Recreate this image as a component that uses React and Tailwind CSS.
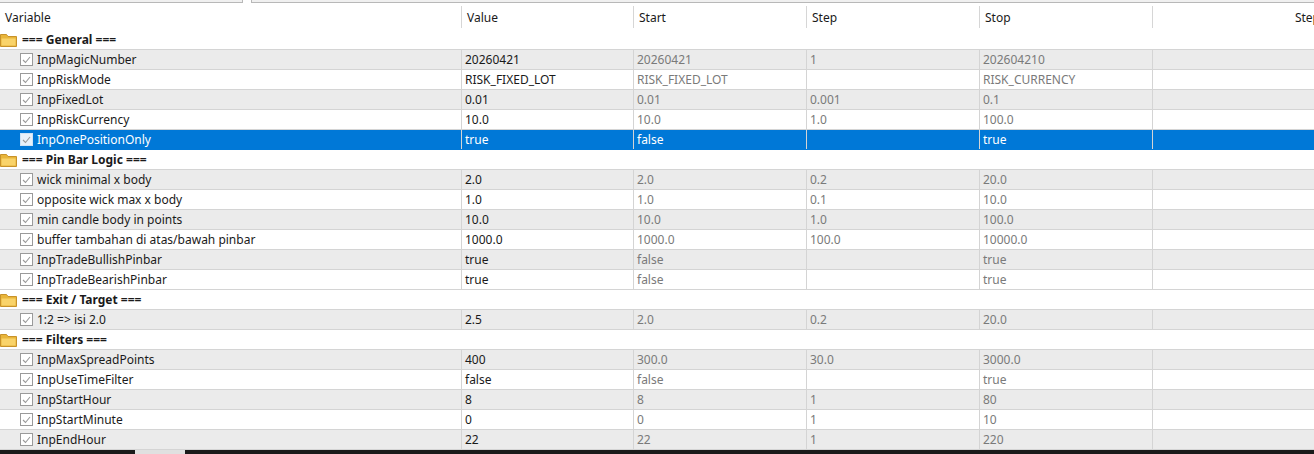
const cols = [461, 172, 173, 173, 173];

const data = [
  { g: "=== General ===" },
  ["InpMagicNumber", "20260421", "20260421", "1", "202604210"],
  ["InpRiskMode", "RISK_FIXED_LOT", "RISK_FIXED_LOT", "", "RISK_CURRENCY"],
  ["InpFixedLot", "0.01", "0.01", "0.001", "0.1"],
  ["InpRiskCurrency", "10.0", "10.0", "1.0", "100.0"],
  ["InpOnePositionOnly", "true", "false", "", "true", true],
  { g: "=== Pin Bar Logic ===" },
  ["wick minimal x body", "2.0", "2.0", "0.2", "20.0"],
  ["opposite wick max x body", "1.0", "1.0", "0.1", "10.0"],
  ["min candle body in points", "10.0", "10.0", "1.0", "100.0"],
  ["buffer tambahan di atas/bawah pinbar", "1000.0", "1000.0", "100.0", "10000.0"],
  ["InpTradeBullishPinbar", "true", "false", "", "true"],
  ["InpTradeBearishPinbar", "true", "false", "", "true"],
  { g: "=== Exit / Target ===" },
  ["1:2 => isi 2.0", "2.5", "2.0", "0.2", "20.0"],
  { g: "=== Filters ===" },
  ["InpMaxSpreadPoints", "400", "300.0", "30.0", "3000.0"],
  ["InpUseTimeFilter", "false", "false", "", "true"],
  ["InpStartHour", "8", "8", "1", "80"],
  ["InpStartMinute", "0", "0", "1", "10"],
  ["InpEndHour", "22", "22", "1", "220"],
];

const Folder = () => (
  <svg width="17" height="14" viewBox="0 0 17 14" className="shrink-0">
    <path d="M0.5 1.5h6l1.5 2h8.5v10h-16z" fill="#e8b53a" stroke="#c8922a" />
    <path d="M1.5 5.5h14v7h-14z" fill="#f9d36a" />
  </svg>
);

const Check = ({ sel }) => (
  <span className={`w-[13px] h-[13px] border shrink-0 flex items-center justify-center ${sel ? "border-[#cfe3f5] bg-[#e8f1fa]" : "border-[#9a9a9a] bg-white"}`}>
    <svg width="9" height="8" viewBox="0 0 9 8">
      <path d="M1 4l2.5 2.5L8 1" fill="none" stroke="#9a9a9a" strokeWidth="1.1" />
    </svg>
  </span>
);

export default function App() {
  let n = 0;
  return (
    <div className="w-[1314px] h-[454px] overflow-hidden bg-white text-[12px] text-[#1a1a1a]" style={{ fontFamily: "'Noto Sans', 'Open Sans', sans-serif" }}>
      <div className="h-[3px] flex">
        <div className="w-[243px] border-b border-r border-[#b8b8b8] bg-[#f0f0f0]" />
        <div className="w-[8px]" />
        <div className="flex-1 border-b border-l border-[#b8b8b8] bg-[#f0f0f0]" />
      </div>
      <div className="h-[27px] flex">
        {["Variable", "Value", "Start", "Step", "Stop"].map((h, i) => (
          <div key={h} className="flex pt-[7px] shrink-0" style={{ width: cols[i] }}>
            {i > 0 && <div className="w-px h-[22px] bg-[#d6d6d6] -mt-[4px]" />}
            <span className="pl-[5px] leading-[16px]">{h}</span>
          </div>
        ))}
        <div className="flex-1 flex pt-[7px]">
          <div className="w-px h-[22px] bg-[#d6d6d6] -mt-[4px]" />
          <span className="ml-auto -mr-[6px] leading-[16px]">Step</span>
        </div>
      </div>
      {data.map((r, i) => {
        if (!Array.isArray(r)) {
          n = 0;
          return (
            <div key={i} className="h-[20px] flex items-center bg-white border-b border-[#d4d4d4]">
              <Folder />
              <span className="font-bold ml-[5px]">{r.g}</span>
            </div>
          );
        }
        const sel = r[5];
        const bg = sel ? "bg-[#0078d7] text-white" : n % 2 === 0 ? "bg-[#ebebeb]" : "bg-white";
        n++;
        return (
          <div key={i} className={`h-[20px] flex border-b ${sel ? "border-[#0078d7]" : "border-[#d4d4d4]"} ${bg}`}>
            <div className="shrink-0 flex items-center pl-[20px] gap-[4px]" style={{ width: cols[0] }}>
              <Check sel={sel} />
              <span>{r[0]}</span>
            </div>
            {[1, 2, 3, 4].map((c) => (
              <div key={c} className={`shrink-0 flex items-center pl-[3px] border-l border-[#d4d4d4] ${sel ? "" : c === 1 ? "text-[#1a1a1a]" : "text-[#7a7a7a]"}`} style={{ width: cols[c] }}>
                {r[c]}
              </div>
            ))}
            <div className="flex-1 border-l border-[#d4d4d4]" />
          </div>
        );
      })}
      <div className="h-[4px] flex">
        <div className="w-[135px] bg-[#1a1a1a]" />
        <div className="w-[50px] bg-[#e0e0e0]" />
        <div className="flex-1 bg-[#1a1a1a]" />
      </div>
    </div>
  );
}
